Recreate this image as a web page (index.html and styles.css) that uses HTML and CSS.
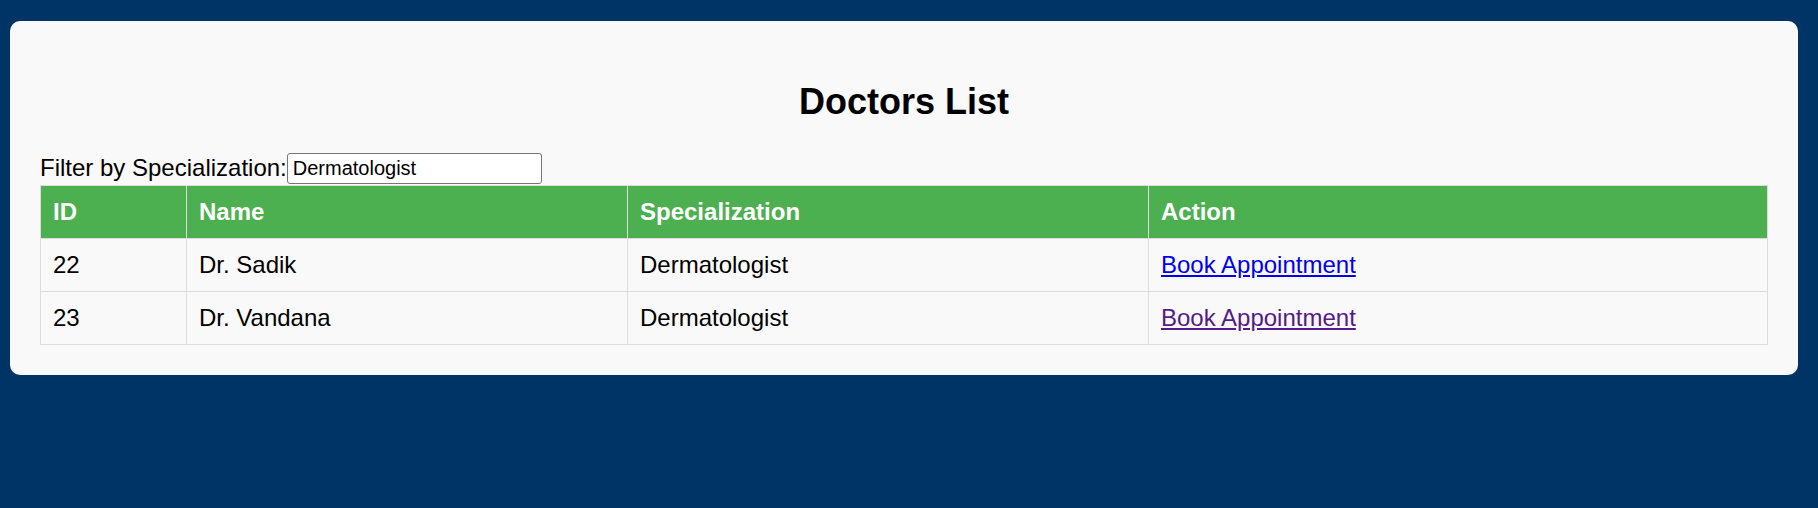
FILE: index.html
```html
<!DOCTYPE html>
<html lang="en">
<head>
<meta charset="utf-8">
<title>Doctors List</title>
<link rel="stylesheet" href="styles.css">
</head>
<body>
<div class="card">
  <h2 class="title">Doctors List</h2>
  <div class="filter">
    <label class="filter-label" for="spec">Filter by Specialization:</label><input class="filter-input" id="spec" type="text" value="Dermatologist">
  </div>
  <table class="doctors">
    <colgroup>
      <col class="c-id">
      <col class="c-name">
      <col class="c-spec">
      <col class="c-action">
    </colgroup>
    <thead>
      <tr>
        <th>ID</th>
        <th>Name</th>
        <th>Specialization</th>
        <th>Action</th>
      </tr>
    </thead>
    <tbody>
      <tr>
        <td>22</td>
        <td>Dr. Sadik</td>
        <td>Dermatologist</td>
        <td><a class="link" href="#book-22">Book Appointment</a></td>
      </tr>
      <tr>
        <td>23</td>
        <td>Dr. Vandana</td>
        <td>Dermatologist</td>
        <td><a class="link link-visited" href="#book-23">Book Appointment</a></td>
      </tr>
    </tbody>
  </table>
</div>
</body>
</html>
```

FILE: styles.css
```css
html, body {
  margin: 0;
  padding: 0;
}

body {
  background: #003366;
  font-family: "Liberation Sans", Arial, sans-serif;
  font-size: 24px;
  color: #000;
  padding: 21px 20px 0 10px;
  height: 508px;
  box-sizing: border-box;
}

.card {
  background: #f9f9f9;
  border-radius: 10px;
  padding: 30px;
}

.title {
  margin: 30px 0;
  font-size: 36px;
  font-weight: bold;
  text-align: center;
  line-height: 41px;
}

.filter {
  height: 33px;
  display: flex;
  align-items: flex-start;
}

.filter-label {
  line-height: 28px;
  padding-top: 2px;
}

.filter-input {
  box-sizing: border-box;
  width: 255px;
  height: 31px;
  margin: 1px 0 0 0;
  padding: 0 5px;
  border: 1px solid #767676;
  border-radius: 3px;
  background: #fff;
  font-family: "Liberation Sans", Arial, sans-serif;
  font-size: 20px;
  color: #000;
}

.doctors {
  width: calc(100% - 1px);
  border-collapse: collapse;
  table-layout: fixed;
}

.c-id { width: 146px; }
.c-name { width: 441px; }
.c-spec { width: 521px; }
.c-action { width: 619px; }

.doctors th,
.doctors td {
  border: 1px solid #ddd;
  padding: 12px;
  text-align: left;
  line-height: 28px;
}

.doctors th {
  background: #4caf50;
  color: #fff;
  font-weight: bold;
}

.link {
  color: #0000ee;
  text-decoration: underline;
}

.link-visited {
  color: #551a8b;
}
```
